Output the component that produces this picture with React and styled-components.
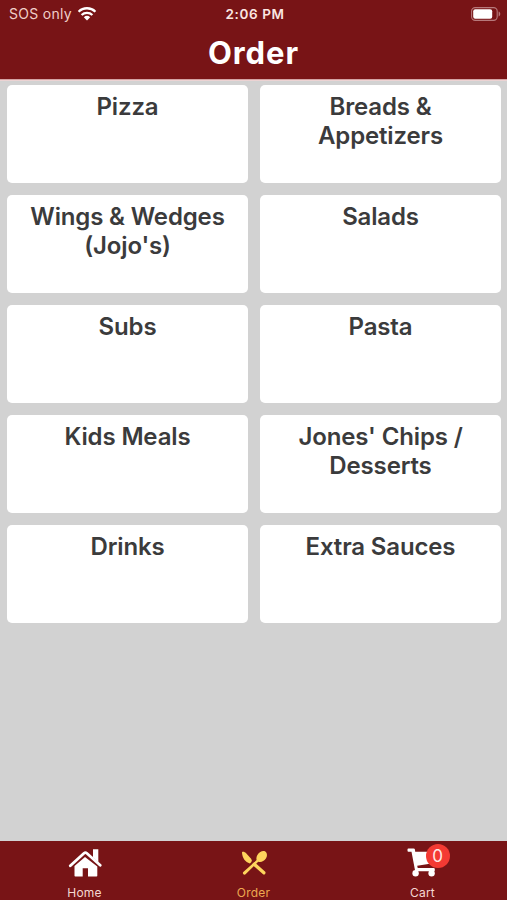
import React from "react";
import styled, { createGlobalStyle } from "styled-components";

const categories = [
  "Pizza",
  "Breads & Appetizers",
  "Wings & Wedges (Jojo's)",
  "Salads",
  "Subs",
  "Pasta",
  "Kids Meals",
  "Jones' Chips / Desserts",
  "Drinks",
  "Extra Sauces",
];

const WifiIcon = () => (
  <svg width="20" height="16" viewBox="0 0 20 16" fill="none" stroke="#fff" strokeWidth="2.3">
    <path d="M1.6 5.7a12 12 0 0 1 16.8 0" />
    <path d="M4.6 9a7.8 7.8 0 0 1 10.8 0" />
    <path d="M10 14.6 6.8 11.3a4.7 4.7 0 0 1 6.4 0Z" fill="#fff" stroke="none" />
  </svg>
);

const BatteryIcon = () => (
  <svg width="30" height="14" viewBox="0 0 30 14">
    <rect x="0.6" y="0.6" width="25.6" height="12.8" rx="3.6" fill="none" stroke="#b7797b" strokeWidth="1.1" />
    <rect x="2.2" y="2.2" width="19" height="9.6" rx="2" fill="#fff" />
    <path d="M27.6 4.6c2.2.6 2.2 4.2 0 4.8Z" fill="#b7797b" />
  </svg>
);

const HomeIcon = () => (
  <svg width="34" height="29" viewBox="0 0 34 29">
    <path d="M6.5 18 17 8.9 29.3 18.5v9.2q0 .8-.8.8H20v-8.2h-5.3v8.2H7.3q-.8 0-.8-.8Z" fill="#fff" />
    <path d="M2.3 17.7 16 5.2q1.4-1.2 2.8 0L32.2 17.2" fill="none" stroke="#fff" strokeWidth="2.8" strokeLinecap="round" />
    <path d="M25 1.2h5.3v13L25 9.4Z" fill="#fff" />
  </svg>
);

const UtensilsIcon = () => (
  <svg width="28" height="28" viewBox="0 0 28 28" fill="#fed45d">
    <path d="M2 3.1c1.2-1 2.8-.2 3.9.9l5.2 5.7q1.4 1.7.3 3.2l-1.5 1.5C5.2 13.4 2 8.9 2 3.1Z" />
    <path d="m11.8 15.4 2.5-2.5 10.7 9.7q1.1 1.1.1 2.3t-2.3.1Z" />
    <path d="M3.3 23 16.6 11.1c-.8-3 .7-6.4 3.7-8.2 2.3-1.4 4.8-1 5.8.3s1.4 4-.2 6.3c-2 3-5 4-7.7 3.2L5.8 25.1c-.8.8-1.7.7-2.4.1s-.7-1.5-.1-2.2Z" />
  </svg>
);

const CartIcon = () => (
  <svg width="32" height="30" viewBox="0 0 32 30" fill="#fff">
    <path d="M.5 1.5q0-.9.9-.9h5.1q1.3 0 1.5 1.2l.2 2H29L27.3 14q-.2 1-1.3 1.2L10.2 17.8l.5 2.2h15.9q1.2 0 1.2 1v1.4q0 .8-1 .8H8.2L4.5 3.7H1.4q-.9 0-.9-.9Z" />
    <circle cx="8.6" cy="25.3" r="3.2" />
    <circle cx="24.6" cy="25.3" r="3.2" />
  </svg>
);

const App = () => {
  return (
    <>
      <GlobalStyle />
      <Screen>
        <Header>
          <StatusBar>
            <Carrier>
              SOS only
              <WifiIcon />
            </Carrier>
            <Clock>2:06 PM</Clock>
            <Battery>
              <BatteryIcon />
            </Battery>
          </StatusBar>
          <Title>Order</Title>
        </Header>
        <Menu>
          {categories.map((name) => (
            <Category key={name}>{name}</Category>
          ))}
        </Menu>
        <TabBar>
          <Tab>
            <IconBox>
              <HomeIcon />
            </IconBox>
            Home
          </Tab>
          <Tab $active>
            <IconBox>
              <UtensilsIcon />
            </IconBox>
            Order
          </Tab>
          <Tab>
            <IconBox>
              <CartIcon />
              <Badge>0</Badge>
            </IconBox>
            Cart
          </Tab>
        </TabBar>
      </Screen>
    </>
  );
};

const GlobalStyle = createGlobalStyle`
  * { box-sizing: border-box; }
  body {
    margin: 0;
    font-family: Inter, "Liberation Sans", sans-serif;
  }
  svg { display: block; }
`;

const Screen = styled.div`
  display: flex;
  flex-direction: column;
  width: 507px;
  height: 900px;
  overflow: hidden;
  background: #d2d2d2;
`;

const Header = styled.header`
  height: 80px;
  background: #781416;
  border-bottom: 1px solid #d3a3a3;
  box-shadow: 0 1px 0 #ecd3d3;
  color: #fff;
`;

const StatusBar = styled.div`
  display: grid;
  grid-template-columns: 1fr auto 1fr;
  align-items: center;
  height: 27px;
  padding: 0 6px 0 9px;
  font-size: 14px;
`;

const Carrier = styled.div`
  display: flex;
  align-items: center;
  gap: 5px;
  color: #f0cfc9;
  letter-spacing: 0.3px;
`;

const Clock = styled.div`
  font-weight: 600;
  font-size: 13.5px;
  letter-spacing: 0.6px;
  color: #fbe6e1;
`;

const Battery = styled.div`
  display: flex;
  justify-content: flex-end;
`;

const Title = styled.h1`
  margin: 0;
  font-size: 31px;
  line-height: 51px;
  font-weight: 700;
  letter-spacing: 0.9px;
  text-align: center;
`;

const Menu = styled.main`
  flex: 1;
  display: grid;
  grid-template-columns: 1fr 1fr;
  grid-auto-rows: 98px;
  align-content: start;
  gap: 12px;
  padding: 5px 6px 0 7px;
`;

const Category = styled.div`
  padding: 7px 20px 0;
  border-radius: 5px;
  background: #fff;
  color: #3b3b3c;
  font-size: 24px;
  line-height: 29px;
  font-weight: 600;
  letter-spacing: -0.15px;
  text-align: center;
`;

const TabBar = styled.nav`
  display: grid;
  grid-template-columns: repeat(3, 1fr);
  height: 59px;
  background: #781416;
`;

const Tab = styled.div`
  display: flex;
  flex-direction: column;
  align-items: center;
  padding-top: 6px;
  font-size: 12px;
  line-height: 16px;
  letter-spacing: 0.2px;
  color: ${(props) => (props.$active ? "#eda850" : "#f5d8d2")};
`;

const IconBox = styled.div`
  position: relative;
  display: flex;
  align-items: center;
  justify-content: center;
  width: 34px;
  height: 31px;
  margin-bottom: 7px;
`;

const Badge = styled.span`
  position: absolute;
  top: -3px;
  left: 20px;
  width: 24px;
  height: 24px;
  border-radius: 50%;
  background: #f43a33;
  color: #ffe9e5;
  font-size: 17px;
  line-height: 24px;
  letter-spacing: 0;
  text-align: center;
`;

export default App;
